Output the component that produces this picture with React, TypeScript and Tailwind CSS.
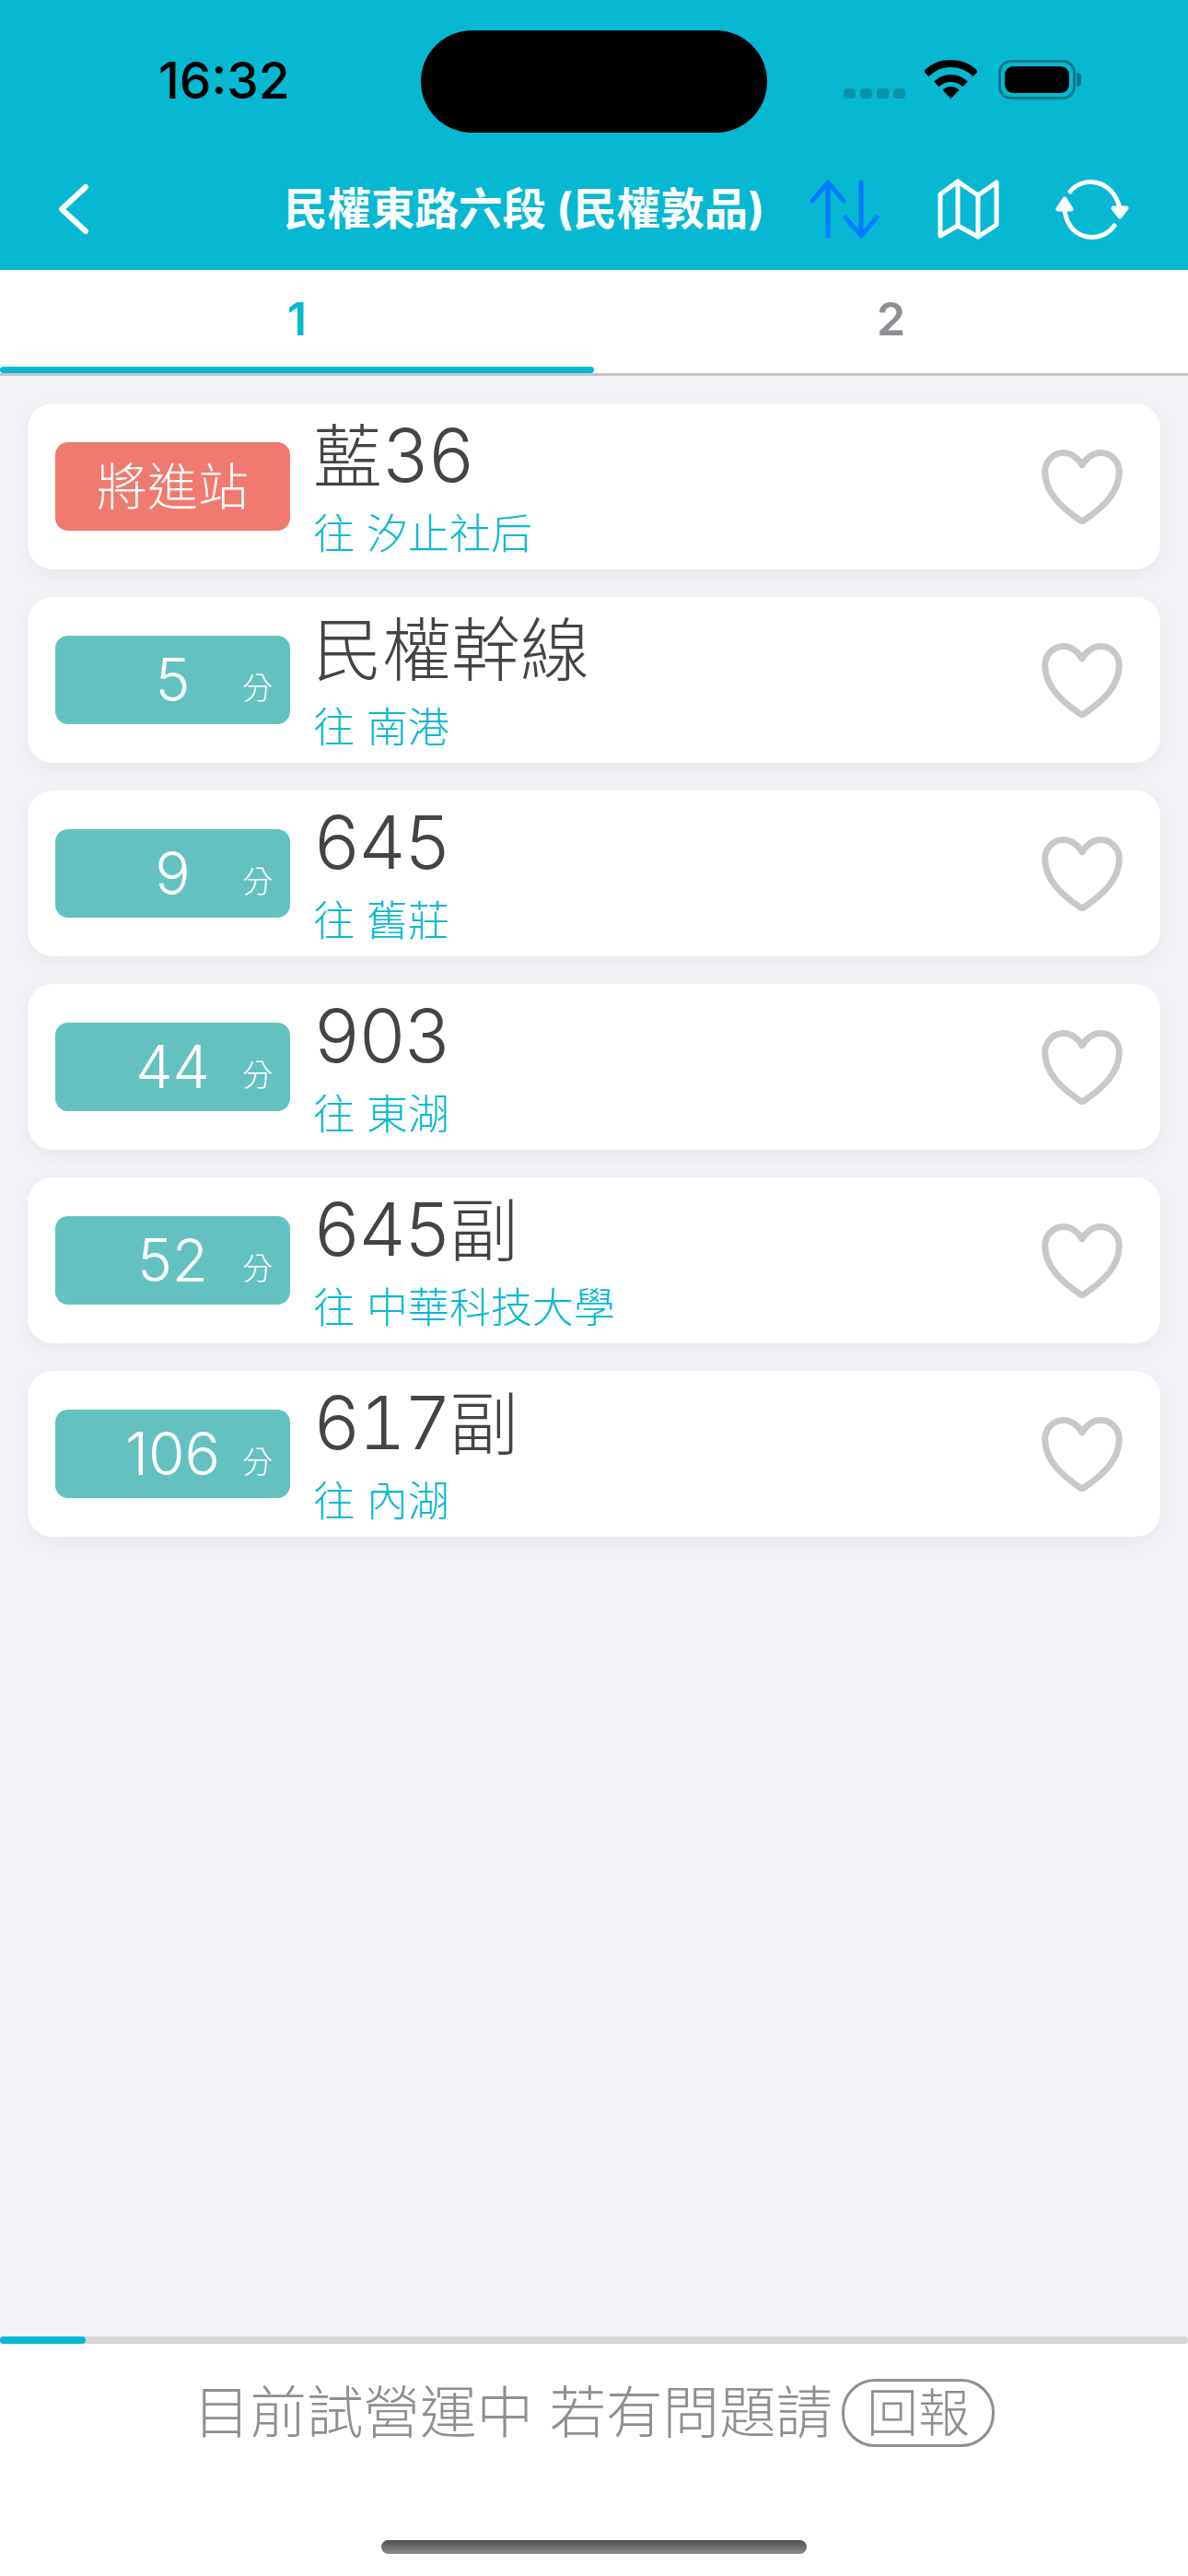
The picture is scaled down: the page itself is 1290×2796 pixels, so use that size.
import React from "react";

const rows = [
  { eta: "將進站", min: false, han0: "藍", num: "36", han: "", to: "汐止社后" },
  { eta: "5", min: true, han0: "民權幹線", num: "", han: "", to: "南港" },
  { eta: "9", min: true, han0: "", num: "645", han: "", to: "舊莊" },
  { eta: "44", min: true, han0: "", num: "903", han: "", to: "東湖" },
  { eta: "52", min: true, han0: "", num: "645", han: "副", to: "中華科技大學" },
  { eta: "106", min: true, han0: "", num: "617", han: "副", to: "內湖" },
];

function Row({ eta, min, han0, num, han, to }: { eta: string; min: boolean; han0: string; num: string; han: string; to: string }) {
  return (
    <div className="flex h-[180px] items-center rounded-[27px] bg-white pl-[30px] pr-[41px] shadow-[0_6px_18px_rgba(60,60,90,0.06)]">
      {min ? (
        <div className="relative flex h-[96px] w-[255px] shrink-0 items-center justify-center rounded-[14px] bg-[#63c1c0] text-[64px] font-light leading-none text-white">
          <span>{eta}</span>
          <span className="absolute right-[19px] bottom-[22px] text-[33px] leading-none">分</span>
        </div>
      ) : (
        <div className="flex h-[96px] w-[255px] shrink-0 items-center justify-center rounded-[14px] bg-[#ef7a6d] text-[55px] font-light leading-none text-white">
          {eta}
        </div>
      )}
      <div className="ml-[25px] flex flex-col self-stretch pt-[14px]">
        <div className="h-[84px] whitespace-pre text-[75px] font-light leading-[84px] text-[#444444]">
          {han0}
          <span className="text-[80px] tabular-nums tracking-[-2.5px]">{num}</span>
          {han}
        </div>
        <div className="mt-[19px] whitespace-pre text-[45px] font-light leading-[50px] text-[#06b8d2]">
          往 {to}
        </div>
      </div>
      <svg className="ml-auto h-[81px] w-[88px]" viewBox="47 63 418 386" fill="none" stroke="#c7c7cc" strokeWidth="33" strokeLinejoin="round">
        <path d="M352.92 80C288 80 256 144 256 144s-32-64-96.92-64c-52.76 0-94.54 44.14-95.08 96.81-1.1 109.33 86.73 187.08 183 252.42a16 16 0 0018 0c96.26-65.34 184.09-143.09 183-252.42-.54-52.67-42.32-96.81-95.08-96.81z" />
      </svg>
    </div>
  );
}

export default function App() {
  return (
    <div className="flex h-[2796px] w-[1290px] flex-col bg-[#f2f2f7] font-['Inter','Noto_Sans_CJK_TC',sans-serif]">
      <header className="h-[293px] shrink-0 bg-[#07b8d2]">
        <div className="flex h-[177px]">
          <div className="w-[457px] pl-[172px] pt-[57px] text-[55px] font-medium leading-[60px] text-black">16:32</div>
          <div className="mt-[33px] h-[111px] w-[376px] rounded-full bg-black" />
          <div className="ml-[83px] mt-[96px] flex h-[11px] gap-[5px]">
            <div className="h-[11px] w-[13px] rounded-[4px] bg-[#0892a8]" />
            <div className="h-[11px] w-[13px] rounded-[4px] bg-[#0892a8]" />
            <div className="h-[11px] w-[13px] rounded-[4px] bg-[#0892a8]" />
            <div className="h-[11px] w-[13px] rounded-[4px] bg-[#0892a8]" />
          </div>
          <svg className="ml-[21px] mt-[65px] h-[43px] w-[57px]" viewBox="0 0 57 43" fill="none">
            <path d="M1.63 15.13A38 38 0 0 1 55.37 15.13" stroke="black" strokeWidth="8" />
            <path d="M12.94 26.44A22 22 0 0 1 44.06 26.44" stroke="black" strokeWidth="8" />
            <path d="M28.5 42L19.31 32.81A13 13 0 0 1 37.69 32.81Z" fill="black" />
          </svg>
          <div className="ml-[23px] mt-[65px] flex h-[43px] items-center">
            <div className="h-[43px] w-[84px] rounded-[14px] border-[3px] border-[#067a8d] p-[4px]">
              <div className="h-full w-full rounded-[9px] bg-black" />
            </div>
            <div className="ml-[1px] h-[15px] w-[5px] rounded-r-[4px] bg-[#067a8d]" />
          </div>
        </div>
        <div className="flex h-[116px] items-center pb-[16px]">
          <div className="flex w-[308px] pl-[60px]">
            <svg className="h-[64px] w-[40px]" viewBox="60 195 40 64" fill="none" stroke="white" strokeWidth="6" strokeLinecap="round" strokeLinejoin="round">
              <path d="M93 203L67 227L93 251" />
            </svg>
          </div>
          <div className="w-[568px] whitespace-pre text-[47.5px] font-bold leading-[60px] text-white">民權東路六段 (民權敦品)</div>
          <svg className="h-[74px] w-[82px]" viewBox="876 190 82 74" fill="none" stroke="#007aff" strokeWidth="5" strokeLinecap="round" strokeLinejoin="round">
            <path d="M899 256V198M882 218L899 198L916 218" />
            <path d="M935 198V256M918 236L935 256L952 236" />
          </svg>
          <svg className="ml-[57px] h-[74px] w-[74px]" viewBox="1015 190 74 74" fill="none" stroke="white" strokeWidth="5" strokeLinecap="round" strokeLinejoin="round">
            <path d="M1021 211L1040 197L1062 212L1082 198V244L1062 257L1040 245L1021 256Z" />
            <path d="M1040 197V245M1062 212V257" />
          </svg>
          <svg className="ml-[54px] h-[74px] w-[86px]" viewBox="1143 190 86 74" fill="none" stroke="white" strokeWidth="5" strokeLinecap="round" strokeLinejoin="round">
            <path d="M1162 208C1175 191 1208 193 1216 226" />
            <path d="M1209 226H1223L1216 235Z" fill="white" />
            <path d="M1156 228C1160 262 1196 265 1210 245" />
            <path d="M1149 227H1163L1156 216Z" fill="white" />
          </svg>
        </div>
      </header>

      <nav className="h-[115px] shrink-0 border-b-[3px] border-[#c6c6c8] bg-white">
        <div className="flex h-[105px] text-[50px] font-semibold">
          <div className="flex w-[645px] items-center justify-center pt-[1px] text-[#06b8d2]">1</div>
          <div className="flex w-[645px] items-center justify-center pt-[1px] text-[#8e8e93]">2</div>
        </div>
        <div className="h-[7px] w-[645px] rounded-full bg-[#06b8d2]" />
      </nav>

      <main className="flex min-h-0 flex-1 flex-col gap-[30px] px-[30px] pt-[30px]">
        {rows.map((r) => (
          <Row key={r.to} {...r} />
        ))}
      </main>

      <div className="h-[8px] shrink-0 rounded-full bg-[#d6d6d8]">
        <div className="h-[8px] w-[93px] rounded-full bg-[#06b8d2]" />
      </div>

      <footer className="flex h-[252px] shrink-0 flex-col items-center bg-white">
        <div className="mt-[38px] flex h-[74px] items-center text-[#8e8e93]">
          <span className="whitespace-pre text-[61.5px] font-light leading-none">目前試營運中 若有問題請</span>
          <span className="ml-[10px] flex h-[74px] w-[166px] items-center justify-center rounded-[36px] border-[3px] border-[#8e8e93] text-[56px] font-light leading-none">回報</span>
        </div>
        <div className="mt-[101px] h-[15px] w-[462px] rounded-[8px] bg-gradient-to-b from-[#505050] to-[#8a8a8a]" />
      </footer>
    </div>
  );
}
